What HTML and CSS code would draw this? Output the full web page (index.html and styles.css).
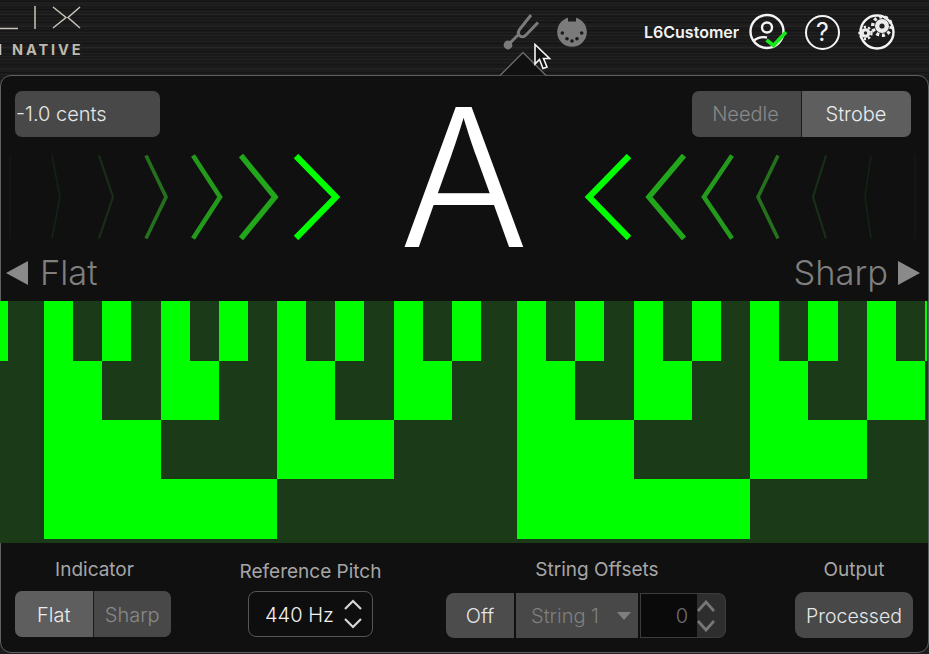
FILE: index.html
```html
<!DOCTYPE html>
<html lang="en">
<head>
  <meta charset="UTF-8">
  <title>HX Native Tuner</title>
  <link rel="stylesheet" href="styles.css">
</head>
<body>
  <header class="topbar">
    <div class="logo">
      <svg class="logo-mark" width="85" height="36" viewBox="0 0 85 36">
        <path d="M0 28.5H18M35 6V29M53 7L66 17.5L53 28M80 7L68 17.5L80 28M0.5 44V55"/>
      </svg>
      <div class="logo-word">NATIVE</div>
    </div>
    <svg class="icon-fork" width="38" height="38" viewBox="0 0 38 38">
      <circle cx="5" cy="32" r="4.4"/>
      <path d="M5 32L16.5 20.5M28 2L16.5 16.5Q14 20.5 17 23Q20 25 23 22L35 9.5"/>
    </svg>
    <svg class="icon-midi" width="30" height="30" viewBox="0 0 30 30">
      <circle class="midi-body" cx="15" cy="15" r="14.8"/>
      <rect class="midi-hole" x="11" y="0" width="8" height="4.5"/>
      <circle class="midi-hole" cx="5.3" cy="16" r="1.8"/>
      <circle class="midi-hole" cx="10" cy="21.7" r="1.8"/>
      <circle class="midi-hole" cx="15" cy="24" r="1.8"/>
      <circle class="midi-hole" cx="20" cy="21.7" r="1.8"/>
      <circle class="midi-hole" cx="24.7" cy="16" r="1.8"/>
    </svg>
    <span class="username">L6Customer</span>
    <svg class="round-icon icon-user" width="38" height="38" viewBox="0 0 38 38">
      <circle class="ring" cx="18" cy="18.5" r="16.5"/>
      <circle class="ring" cx="18" cy="14.5" r="5"/>
      <path class="ring" d="M4.5 28Q10 23 18 24.5"/>
      <path class="check" d="M17.5 27L24.5 32.5L37 19"/>
    </svg>
    <div class="help-icon">?</div>
    <svg class="round-icon icon-gears" width="36" height="36" viewBox="0 0 36 36">
      <circle class="ring" cx="18" cy="18" r="16.5"/>
      <circle class="gear-body" cx="23" cy="12" r="7"/>
      <circle class="gear-teeth" cx="23" cy="12" r="9.3"/>
      <circle class="gear-hole" cx="23" cy="12" r="2.6"/>
      <circle class="gear-body" cx="6.5" cy="19" r="4.8"/>
      <circle class="gear-teeth small" cx="6.5" cy="19" r="6"/>
      <circle class="gear-hole" cx="6.5" cy="19" r="1.7"/>
    </svg>
  </header>

  <main class="panel">
    <svg class="notch" width="50" height="26" viewBox="0 0 50 26">
      <path d="M1 24.5L24 1.5L47 24.5"/>
    </svg>
    <svg class="cursor" width="20" height="30" viewBox="0 0 20 30">
      <path d="M2 1.5V21L6.5 16.5L10 25.5L14 24L10.5 15.5H16.5Z"/>
    </svg>

    <section class="head">
      <div class="cents">-1.0 cents</div>
      <div class="note">A</div>
      <div class="mode-wrap">
        <div class="seg mode">
          <div class="seg-item off">Needle</div>
          <div class="seg-item on">Strobe</div>
        </div>
      </div>

      <svg class="chevrons" width="345" height="86" viewBox="0 0 345 86">
        <path class="c1" d="M10 1V84"/>
        <path class="c2" d="M52 1.5L60 43L52 84.5"/>
        <path class="c3" d="M99 1.5L113 43L99 84.5"/>
        <path class="c4" d="M146 1.5L166 43L146 84.5"/>
        <path class="c5" d="M193 1.5L220 43L193 84.5"/>
        <path class="c6" d="M241 1.5L275 43L241 84.5"/>
        <path class="c7" d="M296 2L336 43L296 84"/>
      </svg>
      <svg class="chevrons" width="349" height="86" viewBox="0 0 349 86">
        <path class="c7" d="M49 2L9 43L49 84"/>
        <path class="c6" d="M104 1.5L69 43L104 84.5"/>
        <path class="c5" d="M152 1.5L124 43L152 84.5"/>
        <path class="c4" d="M198 1.5L178 43L198 84.5"/>
        <path class="c3" d="M246 1.5L233 43L246 84.5"/>
        <path class="c2" d="M291 1.5L285 43L291 84.5"/>
        <path class="c1" d="M335 1V84"/>
      </svg>

      <div class="dir flat"><span class="tri tri-left"></span>Flat</div>
      <div class="dir sharp">Sharp<span class="tri tri-right"></span></div>
    </section>

    <section class="strobe">
      <!-- row 1 -->
      <i class="on"></i><i></i>
      <i class="on"></i><i></i><i class="on"></i><i></i><i class="on"></i><i></i><i class="on"></i><i></i>
      <i class="on"></i><i></i><i class="on"></i><i></i><i class="on"></i><i></i><i class="on"></i><i></i>
      <i class="on"></i><i></i><i class="on"></i><i></i><i class="on"></i><i></i><i class="on"></i><i></i>
      <i class="on"></i><i></i><i class="on"></i><i></i><i class="on"></i><i></i><i class="on"></i><i></i>
      <!-- row 2 -->
      <i class="s2"></i>
      <i class="s2 on"></i><i class="s2"></i><i class="s2 on"></i><i class="s2"></i>
      <i class="s2 on"></i><i class="s2"></i><i class="s2 on"></i><i class="s2"></i>
      <i class="s2 on"></i><i class="s2"></i><i class="s2 on"></i><i class="s2"></i>
      <i class="s2 on"></i><i class="s2"></i><i class="s2 on"></i><i class="s2"></i>
      <!-- row 3 -->
      <i class="s2"></i>
      <i class="s4 on"></i><i class="s4"></i><i class="s4 on"></i><i class="s4"></i>
      <i class="s4 on"></i><i class="s4"></i><i class="s4 on"></i><i class="s4"></i>
      <!-- row 4 -->
      <i class="s2"></i>
      <i class="s8 on"></i><i class="s8"></i><i class="s8 on"></i><i class="s8"></i>
    </section>

    <section class="controls">
      <div class="group group-indicator">
        <div class="label">Indicator</div>
        <div class="seg indicator">
          <div class="seg-item on">Flat</div>
          <div class="seg-item off">Sharp</div>
        </div>
      </div>
      <div class="group group-pitch">
        <div class="label">Reference Pitch</div>
        <div class="pitch">
          <span>440 Hz</span>
          <svg class="updown" width="20" height="32" viewBox="0 0 20 32">
            <path d="M2 11L10 3L18 11M2 21L10 29L18 21"/>
          </svg>
        </div>
      </div>
      <div class="group group-offsets">
        <div class="label">String Offsets</div>
        <div class="offsets">
          <div class="off-btn">Off</div>
          <div class="string-select">String 1<span class="caret"></span></div>
          <div class="offset-value">0</div>
          <div class="offset-arrows">
            <svg class="updown dim" width="18" height="32" viewBox="0 0 18 32">
              <path d="M1 11L9 2L17 11M1 21L9 30L17 21"/>
            </svg>
          </div>
        </div>
      </div>
      <div class="group group-output">
        <div class="label">Output</div>
        <div class="output-btn">Processed</div>
      </div>
    </section>
  </main>
</body>
</html>
```

FILE: styles.css
```css
* {
  box-sizing: border-box;
}

html, body {
  margin: 0;
  height: 654px;
  overflow: hidden;
}

body {
  font-family: Inter, "Liberation Sans", sans-serif;
  background-color: #191919;
  background-image:
    repeating-linear-gradient(0deg, rgba(255,255,255,0.03) 0 1px, transparent 1px 3px),
    repeating-linear-gradient(0deg, rgba(0,0,0,0.18) 0 2px, transparent 2px 7px),
    repeating-linear-gradient(0deg, rgba(255,255,255,0.025) 0 3px, transparent 3px 11px);
}

/* top bar */
.topbar {
  height: 75px;
  display: flex;
  align-items: center;
  position: relative;
}

.logo {
  width: 85px;
  height: 75px;
  flex-shrink: 0;
}

.logo-mark {
  display: block;
  overflow: visible;
}

.logo-mark path {
  fill: none;
  stroke: #c9c4b9;
  stroke-width: 1.5;
}

.logo-word {
  margin: 6px 0 0 12px;
  font-size: 14.5px;
  line-height: 15px;
  font-weight: 700;
  letter-spacing: 2.9px;
  color: #bdb9ae;
}

.icon-fork {
  margin-left: 418px;
  margin-top: -12px;
  flex-shrink: 0;
}

.icon-fork circle {
  fill: #7b7b7b;
}

.icon-fork path {
  fill: none;
  stroke: #7b7b7b;
  stroke-width: 3;
}

.icon-midi {
  margin-left: 16px;
  margin-top: -11px;
  flex-shrink: 0;
}

.midi-body {
  fill: #7b7b7b;
}

.midi-hole {
  fill: #1a1a1a;
}

.username {
  margin-left: 57px;
  margin-top: -11px;
  width: 110px;
  font-size: 16px;
  font-weight: 600;
  color: #f2f2f2;
  flex-shrink: 0;
}

.round-icon {
  margin-top: -11px;
  flex-shrink: 0;
  overflow: visible;
}

.icon-user {
  margin-left: -5px;
}

.ring {
  fill: none;
  stroke: #f4f4f4;
  stroke-width: 2.4;
}

.check {
  fill: none;
  stroke: #19e619;
  stroke-width: 3.8;
}

.help-icon {
  width: 35px;
  height: 35px;
  margin-left: 18px;
  margin-top: -11px;
  border: 2.4px solid #f4f4f4;
  border-radius: 50%;
  display: flex;
  align-items: center;
  justify-content: center;
  font-size: 25px;
  font-weight: 400;
  color: #f4f4f4;
  flex-shrink: 0;
}

.icon-gears {
  margin-left: 19px;
}

.gear-body {
  fill: #ececec;
}

.gear-teeth {
  fill: none;
  stroke: #ececec;
  stroke-width: 3.4;
  stroke-dasharray: 3 2.8;
}

.gear-teeth.small {
  stroke-width: 2.4;
  stroke-dasharray: 2.3 2;
}

.gear-hole {
  fill: #222;
}

/* tuner panel */
.panel {
  position: relative;
  height: 578px;
  background: #101010;
  border: 1px solid #5f5f5f;
  border-radius: 11px;
}

.notch {
  position: absolute;
  left: 498px;
  top: -25px;
}

.notch path {
  fill: #101010;
  stroke: #6a6a6a;
  stroke-width: 1.3;
}

.cursor {
  position: absolute;
  left: 532px;
  top: -33px;
}

.cursor path {
  fill: #111;
  stroke: #f4f4f4;
  stroke-width: 1.6;
}

.head {
  height: 225px;
  margin-left: -1px;
  padding-top: 15px;
  display: grid;
  grid-template-columns: 345px 235px 349px;
  grid-template-rows: 46px 86px 1fr;
  row-gap: 16px;
}

.cents {
  width: 145px;
  margin-left: 15px;
  padding-left: 1px;
  background: #484848;
  border-radius: 7px;
  display: flex;
  align-items: center;
  font-size: 20px;
  font-weight: 300;
  color: #e6e6e6;
}

.note {
  grid-column: 2;
  grid-row: 1 / 4;
  align-self: start;
  text-align: center;
  padding-left: 3px;
  font-size: 192px;
  line-height: 192px;
  font-weight: 300;
  color: #fff;
  margin-top: -10px;
}

.mode-wrap {
  display: flex;
  justify-content: flex-end;
  padding-right: 18px;
}

.seg {
  display: flex;
  border-radius: 7px;
  overflow: hidden;
  gap: 1px;
  background: #1c1c1c;
}

.seg-item {
  display: flex;
  align-items: center;
  justify-content: center;
  font-size: 20px;
  font-weight: 300;
}

.seg-item.on {
  background: #5e5e5e;
  color: #ececec;
}

.seg-item.off {
  background: #484848;
  color: #888;
}

.mode {
  width: 219px;
}

.mode .seg-item.off {
  width: 109px;
  padding-right: 2px;
}

.mode .seg-item.on {
  width: 109px;
  padding-right: 1px;
}

.chevrons {
  display: block;
  margin-top: 1px;
}

.chevrons path {
  fill: none;
}

.c1 { stroke: #161a16; stroke-width: 1; }
.c2 { stroke: #142414; stroke-width: 1.6; }
.c3 { stroke: #172f17; stroke-width: 2.2; }
.c4 { stroke: #25701d; stroke-width: 3.6; }
.c5 { stroke: #249a1c; stroke-width: 4.6; }
.c6 { stroke: #22a61c; stroke-width: 5.6; }
.c7 { stroke: #00ff00; stroke-width: 6.2; }

.dir {
  display: flex;
  align-items: center;
  font-size: 34.5px;
  font-weight: 300;
  color: #7f7f7f;
  line-height: 36px;
  align-self: start;
}

.flat {
  grid-column: 1;
  grid-row: 3;
  padding-left: 6px;
}

.sharp {
  grid-column: 3;
  grid-row: 3;
  justify-content: flex-end;
  padding-right: 9px;
}

.tri {
  width: 0;
  height: 0;
  border-top: 12.5px solid transparent;
  border-bottom: 12.5px solid transparent;
}

.tri-left {
  border-right: 22px solid #8a8a8a;
  margin-right: 12px;
}

.tri-right {
  border-left: 22px solid #8a8a8a;
  margin-left: 10px;
}

/* strobe */
.strobe {
  height: 242px;
  margin-left: -1px;
  padding-bottom: 4px;
  background: #1b3a17;
  display: grid;
  grid-template-columns:
    8px 36px
    29px 29px 29px 30px 29px 29px 29px 29px
    29px 29px 29px 30px 29px 29px 29px 36px
    29px 29px 29px 30px 29px 29px 29px 29px
    29px 29px 30px 29px 29px 29px 2px 1px;
  grid-template-rows: 60px 59px 59px 60px;
}

.strobe i.on {
  background: #00ff00;
}

.s2 { grid-column-end: span 2; }
.s4 { grid-column-end: span 4; }
.s8 { grid-column-end: span 8; }

/* bottom controls */
.controls {
  display: flex;
  align-items: flex-start;
  padding-left: 14px;
}

.group {
  display: flex;
  flex-direction: column;
  flex-shrink: 0;
}

.label {
  text-align: center;
  font-size: 19px;
  line-height: 22px;
  font-weight: 400;
  color: #a6a6a6;
}

.group-indicator {
  width: 156px;
  margin-top: 16px;
}

.group-indicator .label {
  padding-left: 3px;
  margin-bottom: 10px;
}

.indicator {
  height: 46px;
}

.indicator .seg-item {
  width: 78px;
  padding-top: 1px;
}

.group-pitch {
  width: 125px;
  margin-left: 77px;
  margin-top: 18px;
}

.group-pitch .label {
  margin-left: -20px;
  margin-right: -20px;
  margin-bottom: 8px;
}

.pitch {
  height: 46px;
  border: 1px solid #555;
  border-radius: 8px;
  background: #0e0e0e;
  display: flex;
  align-items: center;
  padding-left: 16px;
  gap: 9px;
  font-size: 20px;
  font-weight: 300;
  color: #f2f2f2;
}

.pitch span {
  padding-top: 2px;
}

.updown {
  display: block;
  flex-shrink: 0;
}

.updown path {
  fill: none;
  stroke: #d8d8d8;
  stroke-width: 2.2;
}

.updown.dim path {
  stroke: #777;
  stroke-width: 2.8;
}

.group-offsets {
  width: 280px;
  margin-left: 73px;
  margin-top: 16px;
}

.group-offsets .label {
  padding-left: 22px;
  margin-bottom: 12px;
}

.offsets {
  height: 45px;
  display: flex;
  font-size: 20px;
  font-weight: 300;
}

.off-btn {
  width: 68px;
  padding-top: 1px;
  background: #4c4c4c;
  border-radius: 8px 0 0 8px;
  color: #e6e6e6;
  display: flex;
  align-items: center;
  justify-content: center;
}

.string-select {
  width: 122px;
  margin-left: 2px;
  padding-left: 15px;
  padding-top: 1px;
  background: #484848;
  color: #7f7f7f;
  display: flex;
  align-items: center;
}

.caret {
  margin-left: 18px;
  border-left: 7px solid transparent;
  border-right: 7px solid transparent;
  border-top: 8px solid #7f7f7f;
}

.offset-value {
  width: 57px;
  margin-left: 2px;
  padding-right: 9px;
  padding-top: 1px;
  background: #0a0a0a;
  border: 1px solid #3c3c3c;
  border-right: 0;
  color: #6e6e6e;
  display: flex;
  align-items: center;
  justify-content: flex-end;
}

.offset-arrows {
  flex: 1;
  background: #2e2e2e;
  border: 1px solid #3c3c3c;
  border-left: 0;
  border-radius: 0 8px 8px 0;
  display: flex;
  align-items: center;
}

.group-output {
  width: 118px;
  margin-left: 69px;
  margin-top: 16px;
}

.group-output .label {
  margin-bottom: 11px;
}

.output-btn {
  height: 46px;
  padding-top: 2px;
  background: #484848;
  border-radius: 9px;
  display: flex;
  align-items: center;
  justify-content: center;
  font-size: 19.5px;
  font-weight: 300;
  color: #e6e6e6;
}
```
